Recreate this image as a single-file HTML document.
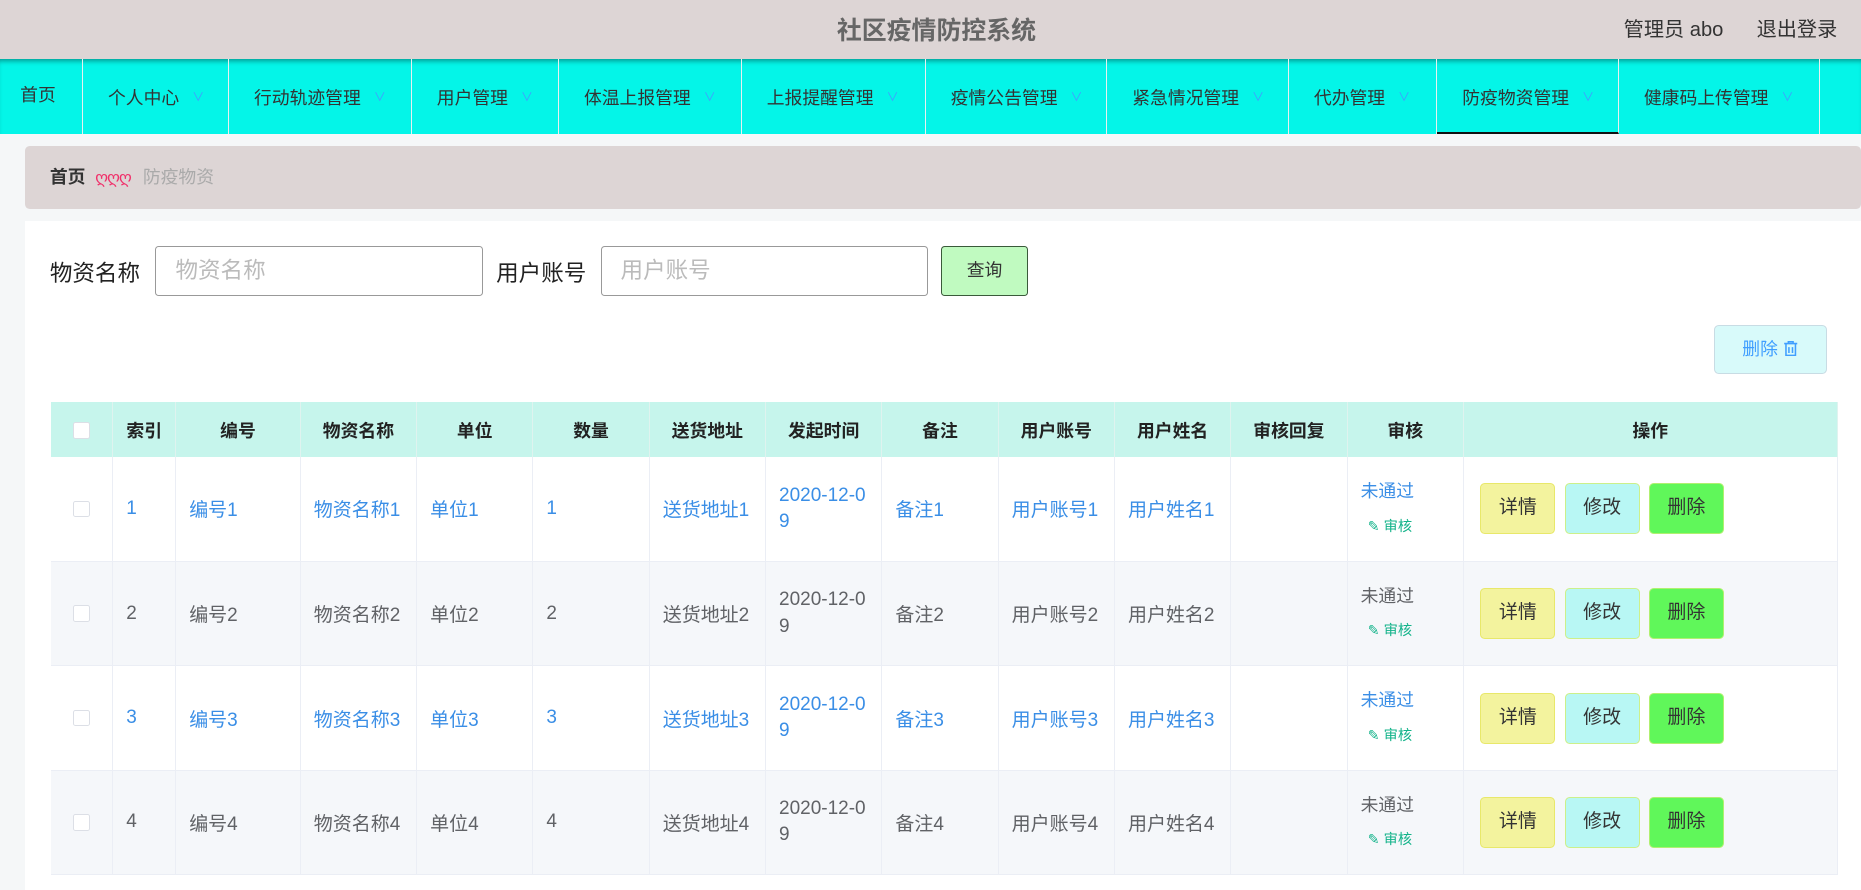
<!DOCTYPE html>
<html><head><meta charset="utf-8"><style>
*{box-sizing:border-box;margin:0;padding:0}
html,body{width:1861px;height:890px;overflow:hidden}
body{background:#f5f7f8;font-family:"Liberation Sans","Noto Sans CJK SC",sans-serif;color:#333}
#w{zoom:1.1869;width:1568px;height:750px;position:relative;overflow:hidden}
.hd{position:absolute;left:0;top:0;width:1568px;height:50px;background:#ddd5d5}
.hd .t{position:absolute;left:0;right:0;top:9px;text-align:center;font-size:21px;font-weight:bold;color:#666;padding-left:10px}
.hd .r{position:absolute;top:11px;font-size:17px;color:#333}
.nav{position:absolute;left:0;top:50px;width:1568px;height:63px;background:#04f5e8;box-shadow:inset 0 4px 4px -2px rgba(0,0,0,.35)}
.nav div{position:absolute;top:0;height:63px;border-right:1px solid #e8f0f0;font-size:15px;color:#333;line-height:66px;padding-left:21px}
.nav div i{font-style:normal;color:#409eff;font-size:10px;margin-left:11px;position:relative;top:-3px}
.nav .a{border-bottom:2px solid #111}
.bc{position:absolute;left:21px;top:123px;width:1547px;height:53px;background:#ddd5d5;border-radius:4px;font-size:15px;line-height:53px;padding-left:21px}
.pn{position:absolute;left:21px;top:186px;width:1547px;height:600px;background:#fff}
.lb{position:absolute;top:216px;font-size:19px;color:#222}
.in{position:absolute;top:207px;height:42px;border:1px solid #999;border-radius:3px;font-size:19px;color:#bbb;padding-left:16px;line-height:40px;background:#fff}
.q{position:absolute;left:793px;top:207px;width:73px;height:42px;background:#c0fac0;border:1px solid #3a5a3a;border-radius:3px;font-size:15px;text-align:center;line-height:40px}
.del{position:absolute;left:1444px;top:274px;width:95px;height:41px;background:#d8fafa;border:1px solid #c8dce4;border-radius:4px;color:#409eff;font-size:15px;line-height:39px;text-align:center}
table{position:absolute;left:43px;top:339px;border-collapse:collapse;table-layout:fixed;width:1505px}
th{height:46px;background:#c6f5ec;font-size:15px;font-weight:bold;color:#222;border-right:1px solid #dff3ef}
td{height:88px;border-right:1px solid #ebeef5;border-bottom:1px solid #ebeef5;font-size:16px;padding-left:11px;color:#3a8ee6}
tr.e td{background:#f5f7fa;color:#606266}
.cb{display:inline-block;width:14px;height:14px;border:1px solid #dcdfe6;border-radius:2px;background:#fff;vertical-align:middle}
td.c{padding-left:0;text-align:center}
.sh{font-size:15px;line-height:22px}
.sh span{display:block;font-size:12px;color:#13b38a;margin-left:6px;margin-top:8px}
.b{display:inline-block;width:63px;height:43px;border-radius:4px;line-height:41px;text-align:center;font-size:16px;color:#333;margin-right:8px;border:1px solid}
.b1{background:#f3f39e;border-color:#e8e86a}.b2{background:#b8f7f4;border-color:#ccf08a}.b3{background:#60f75a;border-color:#b0f070}
</style></head><body><div id="w">
<div class="hd"><div class="t">社区疫情防控系统</div><div class="r" style="left:1368px">管理员 abo</div><div class="r" style="left:1480px">退出登录</div></div>
<div class="nav">
<div style="left:0;width:70px;padding-left:17px;line-height:62px">首页</div>
<div style="left:70px;width:123px">个人中心<i>∨</i></div>
<div style="left:193px;width:154px">行动轨迹管理<i>∨</i></div>
<div style="left:347px;width:124px">用户管理<i>∨</i></div>
<div style="left:471px;width:154px">体温上报管理<i>∨</i></div>
<div style="left:625px;width:155px">上报提醒管理<i>∨</i></div>
<div style="left:780px;width:153px">疫情公告管理<i>∨</i></div>
<div style="left:933px;width:153px">紧急情况管理<i>∨</i></div>
<div style="left:1086px;width:125px">代办管理<i>∨</i></div>
<div class="a" style="left:1211px;width:153px">防疫物资管理<i>∨</i></div>
<div style="left:1364px;width:169px">健康码上传管理<i>∨</i></div>
<div style="left:1533px;width:40px"></div>
</div>
<div class="bc"><b>首页</b> <span style="color:#f0306a;font-size:14px;margin:0 6px 0 4px;letter-spacing:-1px">ღღღ</span> <span style="color:#aaa">防疫物资</span></div>
<div class="pn"></div>
<div class="lb" style="left:42px">物资名称</div><div class="in" style="left:131px;width:276px">物资名称</div>
<div class="lb" style="left:418px">用户账号</div><div class="in" style="left:506px;width:276px">用户账号</div>
<div class="q">查询</div>
<div class="del">删除 <svg width="13" height="14" viewBox="0 0 13 14" style="vertical-align:-1px"><path d="M1 3h11M4.5 3V1.5h4V3M2.5 3v10h8V3M5 6v5M8 6v5" fill="none" stroke="#409eff" stroke-width="1.3"/></svg></div>
<table>
<colgroup><col style="width:52px"><col style="width:53px"><col style="width:105px"><col style="width:98px"><col style="width:98px"><col style="width:98px"><col style="width:98px"><col style="width:98px"><col style="width:98px"><col style="width:98px"><col style="width:98px"><col style="width:98px"><col style="width:98px"><col style="width:315px"></colgroup>
<tr><th><span class="cb"></span></th><th>索引</th><th>编号</th><th>物资名称</th><th>单位</th><th>数量</th><th>送货地址</th><th>发起时间</th><th>备注</th><th>用户账号</th><th>用户姓名</th><th>审核回复</th><th>审核</th><th>操作</th></tr>
<tr><td class="c"><span class="cb"></span></td><td>1</td><td>编号1</td><td>物资名称1</td><td>单位1</td><td>1</td><td>送货地址1</td><td style="line-height:22px">2020-12-0<br>9</td><td>备注1</td><td>用户账号1</td><td>用户姓名1</td><td></td><td class="sh">未通过<span>✎ 审核</span></td><td style="padding-left:14px"><span class="b b1">详情</span><span class="b b2">修改</span><span class="b b3">删除</span></td></tr>
<tr class="e"><td class="c"><span class="cb"></span></td><td>2</td><td>编号2</td><td>物资名称2</td><td>单位2</td><td>2</td><td>送货地址2</td><td style="line-height:22px">2020-12-0<br>9</td><td>备注2</td><td>用户账号2</td><td>用户姓名2</td><td></td><td class="sh">未通过<span>✎ 审核</span></td><td style="padding-left:14px"><span class="b b1">详情</span><span class="b b2">修改</span><span class="b b3">删除</span></td></tr>
<tr><td class="c"><span class="cb"></span></td><td>3</td><td>编号3</td><td>物资名称3</td><td>单位3</td><td>3</td><td>送货地址3</td><td style="line-height:22px">2020-12-0<br>9</td><td>备注3</td><td>用户账号3</td><td>用户姓名3</td><td></td><td class="sh">未通过<span>✎ 审核</span></td><td style="padding-left:14px"><span class="b b1">详情</span><span class="b b2">修改</span><span class="b b3">删除</span></td></tr>
<tr class="e"><td class="c"><span class="cb"></span></td><td>4</td><td>编号4</td><td>物资名称4</td><td>单位4</td><td>4</td><td>送货地址4</td><td style="line-height:22px">2020-12-0<br>9</td><td>备注4</td><td>用户账号4</td><td>用户姓名4</td><td></td><td class="sh">未通过<span>✎ 审核</span></td><td style="padding-left:14px"><span class="b b1">详情</span><span class="b b2">修改</span><span class="b b3">删除</span></td></tr>
</table>
</div></body></html>
